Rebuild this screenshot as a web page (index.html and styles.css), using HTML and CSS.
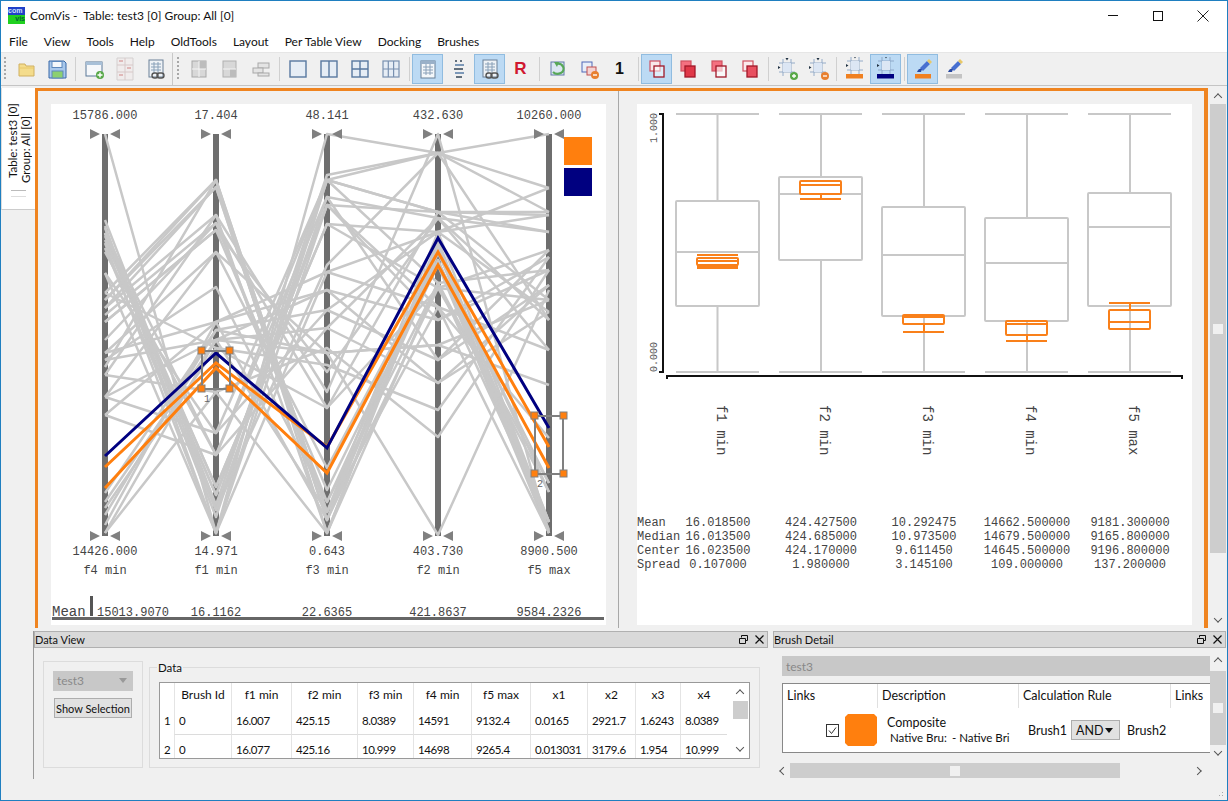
FILE: index.html
```html
<!DOCTYPE html>
<html lang="en">
<head>
    <meta charset="UTF-8">
    <title>ComVis - Table: test3 [0] Group: All [0]</title>
    <link rel="stylesheet" href="styles.css">
</head>
<body>
<svg class="icon-defs" width="0" height="0">
    <defs>
        <symbol id="i-folder" viewBox="0 0 24 24"><path d="M5 7h6l1 2h8v10H5z" fill="#f4dc8c" stroke="#d0b060"/><path d="M5 11h15" stroke="#e8c868"/></symbol>
        <symbol id="i-save" viewBox="0 0 24 24"><path d="M4 4h15l2 2v15H4z" fill="#a8c8ec" stroke="#3868a8"/><rect x="7" y="4.500" width="10" height="6" fill="#f4f8fc" stroke="#5c88bc"/><rect x="7" y="14" width="11" height="7" fill="#8cd070" stroke="#5c88bc"/></symbol>
        <symbol id="i-new" viewBox="0 0 24 24"><rect x="4" y="5" width="16" height="14" fill="#f6f8fb" stroke="#5a7898"/><rect x="4" y="5" width="16" height="3" fill="#a8c0d8"/><circle cx="18" cy="18" r="4" fill="#58a848"/><path d="M18 15.500v5M15.500 18h5" stroke="#fff" stroke-width="1.400"/></symbol>
        <symbol id="i-sheets" viewBox="0 0 24 24"><path d="M4 1h16v22H4z" fill="#f0ecec" stroke="#d4d0d0"/><path d="M12 1v22M4 8h16M4 15h16" stroke="#d8c8c8"/><path d="M6 4h4M14 11h4M6 18h4" stroke="#e0b8b8" stroke-width="2"/></symbol>
        <symbol id="i-link" viewBox="0 0 24 24"><rect x="5" y="3" width="14" height="17" fill="#eef2f6" stroke="#6a8098"/><path d="M7 7h10M7 10h10M7 13h10M10 5v11M14 5v11" stroke="#88a0b8"/><rect x="8" y="16" width="6" height="5" rx="2.500" fill="none" stroke="#555" stroke-width="1.400"/><rect x="13" y="16" width="7" height="5" rx="2.500" fill="none" stroke="#555" stroke-width="1.400"/></symbol>
        <symbol id="i-gsplit" viewBox="0 0 24 24"><rect x="5" y="4" width="14" height="16" fill="#d8d8d8" stroke="#a8a8a8"/><rect x="12" y="4" width="7" height="8" fill="#bcbcbc"/><path d="M12 4v16M5 12h14" stroke="#f4f4f4"/></symbol>
        <symbol id="i-gsplit2" viewBox="0 0 24 24"><rect x="5" y="4" width="13" height="16" fill="#d8d8d8" stroke="#b0b0b0"/><rect x="12" y="12" width="6" height="8" fill="#bcbcbc"/><path d="M5 12h13" stroke="#f4f4f4"/></symbol>
        <symbol id="i-gtree" viewBox="0 0 24 24"><rect x="9" y="6" width="11" height="5" fill="#e4e4e4" stroke="#a8a8a8"/><rect x="4" y="11" width="10" height="5" fill="#e4e4e4" stroke="#a8a8a8"/><rect x="9" y="16" width="11" height="3" fill="#e4e4e4" stroke="#a8a8a8"/></symbol>
        <symbol id="i-p1" viewBox="0 0 24 24"><rect x="4" y="4" width="16" height="16" fill="#e6edf5" stroke="#5878a0" stroke-width="1.400"/></symbol>
        <symbol id="i-p2" viewBox="0 0 24 24"><rect x="4" y="4" width="16" height="16" fill="#e6edf5" stroke="#5878a0" stroke-width="1.400"/><path d="M12 4v16" stroke="#5878a0" stroke-width="1.400"/></symbol>
        <symbol id="i-p4" viewBox="0 0 24 24"><rect x="4" y="4" width="16" height="16" fill="#e6edf5" stroke="#5878a0" stroke-width="1.400"/><path d="M12 4v16M4 12h16" stroke="#5878a0" stroke-width="1.400"/></symbol>
        <symbol id="i-p6" viewBox="0 0 24 24"><rect x="4" y="4" width="16" height="16" fill="#e6edf5" stroke="#7890b0" stroke-width="1.200"/><path d="M9.300 4v16M14.600 4v16M4 12h16" stroke="#7890b0" stroke-width="1.200"/></symbol>
        <symbol id="i-table" viewBox="0 0 24 24"><rect x="5" y="4" width="14" height="17" fill="#f4f7fa" stroke="#6a8098"/><rect x="5" y="4" width="14" height="3" fill="#9ab0c8"/><path d="M7 10h10M7 13h10M7 16h10M10 7v11M14 7v11" stroke="#8aa0b8"/></symbol>
        <symbol id="i-order" viewBox="0 0 24 24"><path d="M8 4h2M13 4h2M7 12h9M9 20h6" stroke="#345" stroke-width="1.400"/><path d="M8 8h9M8 16h9" stroke="#7c98b8" stroke-width="2.200"/></symbol>
        <symbol id="i-cycle" viewBox="0 0 24 24"><rect x="5" y="5" width="13" height="13" fill="#dce6f2" stroke="#6078a8"/><path d="M7 15a6 5 0 1 0 3-8" fill="none" stroke="#58a858" stroke-width="2.200"/><path d="M8 5l5 0-2 5z" fill="#58a858"/></symbol>
        <symbol id="i-copy" viewBox="0 0 24 24"><rect x="5" y="5" width="10" height="10" fill="#e8eef8" stroke="#5068b8"/><rect x="10" y="10" width="9" height="8" fill="#f4d4d4" stroke="#c05050"/><circle cx="18" cy="18" r="4" fill="#e88030"/><path d="M16 18h4" stroke="#fff" stroke-width="1.400"/></symbol>
        <symbol id="i-r1" viewBox="0 0 24 24"><rect x="5" y="4" width="10" height="10" fill="#f8e8ea" stroke="#d05060" stroke-width="1.200"/><rect x="9" y="9" width="10" height="11" fill="#fff" fill-opacity=".5" stroke="#a01828" stroke-width="1.300"/></symbol>
        <symbol id="i-r2" viewBox="0 0 24 24"><rect x="5" y="4" width="10" height="10" fill="#f47080" stroke="#d05060" stroke-width="1.200"/><rect x="9" y="9" width="10" height="11" fill="#e03848" stroke="#a01828" stroke-width="1.300"/></symbol>
        <symbol id="i-r3" viewBox="0 0 24 24"><rect x="5" y="4" width="10" height="10" fill="#f47080" stroke="#d05060" stroke-width="1.200"/><rect x="9" y="9" width="10" height="11" fill="#fff" fill-opacity=".6" stroke="#a01828" stroke-width="1.300"/></symbol>
        <symbol id="i-r4" viewBox="0 0 24 24"><rect x="5" y="4" width="10" height="10" fill="#fbeaec" stroke="#d05060" stroke-width="1.200"/><rect x="9" y="9" width="10" height="11" fill="#e85060" stroke="#a01828" stroke-width="1.300"/></symbol>
        <symbol id="i-cross" viewBox="0 0 24 24"><path d="M8 2v17M16 2v17M4 6h16M4 15h16" stroke="#8aa4c4" stroke-width=".9"/><rect x="8" y="6" width="8" height="9" fill="#dce6f4"/><path d="M10.500 1h3L12 3.500zM3 9v3l2.500-1.500z" fill="#234"/></symbol>
        <symbol id="i-brush" viewBox="0 0 24 24"><path d="M9 11l7-7 3 3-7 7z" fill="#4870d0"/><path d="M16 4l2-2 3 3-2 2z" fill="#e8c868"/><path d="M6 15c1-3 3-4 5-3l-1 3z" fill="#2848a0"/></symbol>
    </defs>
</svg>

<div class="window">
    <header class="titlebar">
        <div class="app-icon"><span class="app-com">com</span><span class="app-vis">vis</span></div>
        <div class="title-text">ComVis -&nbsp; Table: test3 [0] Group: All [0]</div>
        <div class="win-controls">
            <span class="win-min"></span>
            <span class="win-max"></span>
            <svg class="win-close" width="12" height="12" viewBox="0 0 12 12"><path d="M.5.500l11 11M11.500.500l-11 11" stroke="#222" fill="none"/></svg>
        </div>
    </header>

    <nav class="menubar">
        <span>File</span><span>View</span><span>Tools</span><span>Help</span><span>OldTools</span><span>Layout</span><span>Per Table View</span><span>Docking</span><span>Brushes</span>
    </nav>

    <div class="toolbar">
        <span class="grip"></span>
        <button class="tool"><svg><use href="#i-folder"/></svg></button>
        <button class="tool"><svg><use href="#i-save"/></svg></button>
        <span class="sep"></span>
        <button class="tool"><svg><use href="#i-new"/></svg></button>
        <button class="tool"><svg><use href="#i-sheets"/></svg></button>
        <button class="tool"><svg><use href="#i-link"/></svg></button>
        <span class="bar-end"></span>
        <span class="grip"></span>
        <button class="tool"><svg><use href="#i-gsplit"/></svg></button>
        <button class="tool"><svg><use href="#i-gsplit2"/></svg></button>
        <button class="tool"><svg><use href="#i-gtree"/></svg></button>
        <span class="sep"></span>
        <button class="tool"><svg><use href="#i-p1"/></svg></button>
        <button class="tool"><svg><use href="#i-p2"/></svg></button>
        <button class="tool"><svg><use href="#i-p4"/></svg></button>
        <button class="tool"><svg><use href="#i-p6"/></svg></button>
        <span class="sep"></span>
        <button class="tool active"><svg><use href="#i-table"/></svg></button>
        <button class="tool"><svg><use href="#i-order"/></svg></button>
        <button class="tool active"><svg><use href="#i-link"/></svg></button>
        <button class="tool tool-r">R</button>
        <span class="sep"></span>
        <button class="tool"><svg><use href="#i-cycle"/></svg></button>
        <button class="tool"><svg><use href="#i-copy"/></svg></button>
        <button class="tool tool-one">1</button>
        <span class="sep"></span>
        <button class="tool active"><svg><use href="#i-r1"/></svg></button>
        <button class="tool"><svg><use href="#i-r2"/></svg></button>
        <button class="tool"><svg><use href="#i-r3"/></svg></button>
        <button class="tool"><svg><use href="#i-r4"/></svg></button>
        <span class="sep"></span>
        <button class="tool"><svg viewBox="0 0 24 24"><use href="#i-cross"/><circle cx="19" cy="19" r="4" fill="#58a848"/><path d="M19 17v4M17 19h4" stroke="#fff" stroke-width="1.300"/></svg></button>
        <button class="tool"><svg viewBox="0 0 24 24"><use href="#i-cross"/><circle cx="19" cy="19" r="4" fill="#e88030"/><path d="M17 19h4" stroke="#fff" stroke-width="1.300"/></svg></button>
        <span class="sep"></span>
        <button class="tool"><svg viewBox="0 0 24 24"><use href="#i-cross" transform="translate(0 -2)"/><rect x="3" y="17" width="17" height="4.500" fill="#f08020"/></svg></button>
        <button class="tool active"><svg viewBox="0 0 24 24"><use href="#i-cross" transform="translate(0 -2)"/><rect x="3" y="17" width="17" height="4.500" fill="#000080"/></svg></button>
        <span class="sep"></span>
        <button class="tool active"><svg viewBox="0 0 24 24"><use href="#i-brush"/><rect x="4" y="17" width="16" height="4.500" fill="#f08020"/></svg></button>
        <button class="tool"><svg viewBox="0 0 24 24"><use href="#i-brush"/><rect x="4" y="17" width="16" height="4.500" fill="#c4c4c4"/></svg></button>
    </div>

    <div class="workspace">
        <aside class="side-tabs">
            <div class="side-tab">
                <div class="side-tab-text">
                    <div class="side-line-first">Table: test3 [0]</div>
                    <div>Group: All [0]</div>
                </div>
                <span class="side-tab-icon"></span>
            </div>
        </aside>

        <main class="frame">
            <section class="view view-left">
                <svg class="plot" width="555" height="521" viewBox="51 104 555 521">
                    <g class="axis-lines">
                        <path d="M105 134V536M216 134V536M327 134V536M438 134V536M549 134V536"/>
                    </g>
                    <g class="lines-bg">
                        <polyline points="105,134 216,533 327,134 438,153 549,134"/>
                        <polyline points="105,220 216,505 327,175 438,153 549,212"/>
                        <polyline points="105,226 216,533 327,180 438,153 549,188"/>
                        <polyline points="105,233 216,517 327,180 438,212 549,215"/>
                        <polyline points="105,228 216,510 327,197 438,218 549,232"/>
                        <polyline points="105,233 216,495 327,205 438,212 549,300"/>
                        <polyline points="105,236 216,487 327,224 438,232 549,188"/>
                        <polyline points="105,240 216,495 327,205 438,320 549,257"/>
                        <polyline points="105,252 216,455 327,180 438,283 549,270"/>
                        <polyline points="105,233 216,487 327,224 438,288 549,250"/>
                        <polyline points="105,273 216,433 327,180 438,212 549,232"/>
                        <polyline points="105,233 216,455 327,197 438,360 549,285"/>
                        <polyline points="105,248 216,510 327,265 438,153 549,320"/>
                        <polyline points="105,243 216,533 327,272 438,232 549,312"/>
                        <polyline points="105,293 216,180 327,512 438,232 549,522"/>
                        <polyline points="105,300 216,187 327,520 438,240 549,533"/>
                        <polyline points="105,308 216,215 327,533 438,250 549,533"/>
                        <polyline points="105,315 216,223 327,502 438,260 549,522"/>
                        <polyline points="105,322 216,230 327,490 438,265 549,533"/>
                        <polyline points="105,300 216,180 327,533 438,283 549,492"/>
                        <polyline points="105,308 216,187 327,520 438,288 549,483"/>
                        <polyline points="105,353 216,252 327,468 438,260 549,530"/>
                        <polyline points="105,360 216,287 327,502 438,283 549,522"/>
                        <polyline points="105,367 216,180 327,512 438,307 549,533"/>
                        <polyline points="105,375 216,215 327,392 438,134 549,533"/>
                        <polyline points="105,340 216,223 327,408 438,212 549,212"/>
                        <polyline points="105,322 216,230 327,372 438,218 549,320"/>
                        <polyline points="105,397 216,252 327,353 438,345 549,300"/>
                        <polyline points="105,415 216,322 327,290 438,320 549,270"/>
                        <polyline points="105,493 216,330 327,310 438,360 549,250"/>
                        <polyline points="105,502 216,340 327,328 438,383 549,285"/>
                        <polyline points="105,508 216,348 327,365 438,410 549,257"/>
                        <polyline points="105,533 216,392 327,348 438,437 549,270"/>
                        <polyline points="105,525 216,322 327,272 438,307 549,350"/>
                        <polyline points="105,533 216,340 327,290 438,383 549,312"/>
                        <polyline points="105,515 216,330 327,353 438,345 549,385"/>
                        <polyline points="105,397 216,433 327,310 438,232 549,215"/>
                        <polyline points="105,415 216,455 327,328 438,218 549,350"/>
                        <polyline points="105,293 216,348 327,408 438,288 549,300"/>
                        <polyline points="105,273 216,533 327,205 438,307 549,438"/>
                        <polyline points="105,353 216,322 327,520 438,253 549,492"/>
                        <polyline points="105,360 216,340 327,512 438,262 549,483"/>
                        <polyline points="105,375 216,392 327,533 438,245 549,522"/>
                        <polyline points="105,397 216,340 327,353 438,535 549,290"/>
                    </g>
                    <g class="lines-orange">
                        <polyline points="105,467 216,363 327,447 438,252 549,447"/>
                        <polyline points="105,488 216,368 327,473 438,265 549,468"/>
                    </g>
                    <polyline class="line-navy" points="105,456 216,353 327,448 438,238 549,428"/>

                    <g class="axis-arrows">
                        <path d="M90 129l10 5-10 5zM120 129l-10 5 10 5zM201 129l10 5-10 5zM231 129l-10 5 10 5zM312 129l10 5-10 5zM342 129l-10 5 10 5zM423 129l10 5-10 5zM453 129l-10 5 10 5zM534 129l10 5-10 5zM564 129l-10 5 10 5z"/>
                        <path d="M90 531l10 5-10 5zM120 531l-10 5 10 5zM201 531l10 5-10 5zM231 531l-10 5 10 5zM312 531l10 5-10 5zM342 531l-10 5 10 5zM423 531l10 5-10 5zM453 531l-10 5 10 5zM534 531l10 5-10 5zM564 531l-10 5 10 5z"/>
                    </g>

                    <g class="sel-box">
                        <rect x="202" y="351" width="28" height="38"/>
                        <rect x="535" y="416" width="28" height="58"/>
                    </g>
                    <g class="sel-handle">
                        <rect x="198" y="347" width="7" height="7"/><rect x="226" y="347" width="7" height="7"/>
                        <rect x="198" y="385" width="7" height="7"/><rect x="226" y="385" width="7" height="7"/>
                        <rect x="531" y="412" width="7" height="7"/><rect x="560" y="412" width="7" height="7"/>
                        <rect x="531" y="470" width="7" height="7"/><rect x="560" y="470" width="7" height="7"/>
                    </g>
                    <text class="sel-label" x="204" y="402">1</text>
                    <text class="sel-label" x="537" y="487">2</text>

                    <rect x="564" y="137" width="28" height="28" fill="#ff7f0e"/>
                    <rect x="564" y="168" width="28" height="28" fill="#000080"/>

                    <g class="mono mid">
                        <text x="105" y="119">15786.000</text>
                        <text x="216" y="119">17.404</text>
                        <text x="327" y="119">48.141</text>
                        <text x="438" y="119">432.630</text>
                        <text x="549" y="119">10260.000</text>
                        <text x="105" y="555">14426.000</text>
                        <text x="216" y="555">14.971</text>
                        <text x="327" y="555">0.643</text>
                        <text x="438" y="555">403.730</text>
                        <text x="549" y="555">8900.500</text>
                        <text x="105" y="574">f4 min</text>
                        <text x="216" y="574">f1 min</text>
                        <text x="327" y="574">f3 min</text>
                        <text x="438" y="574">f2 min</text>
                        <text x="549" y="574">f5 max</text>
                        <text x="133" y="616">15013.9070</text>
                        <text x="216" y="616">16.1162</text>
                        <text x="327" y="616">22.6365</text>
                        <text x="438" y="616">421.8637</text>
                        <text x="549" y="616">9584.2326</text>
                    </g>
                    <text class="mono mean-label" x="52" y="616">Mean</text>
                    <rect x="90" y="596" width="3" height="20" fill="#555"/>
                    <rect x="52" y="617" width="552" height="3" fill="#666"/>
                </svg>
            </section>

            <div class="view-split"></div>

            <section class="view view-right">
                <svg class="plot" width="555" height="521" viewBox="637 104 555 521">
                    <path class="axis-black" d="M659 114H663V372H659M667 379V376H1182V379"/>
                    <text class="mono tick-y" transform="translate(657 143) rotate(-90)">1.000</text>
                    <text class="mono tick-y" transform="translate(657 372) rotate(-90)">0.000</text>

                    <g class="box-gray">
                        <path d="M676 114H759M717.500 114V201M717.500 306V372M676 372H759"/>
                        <rect x="676" y="201" width="83" height="105" rx="1"/>
                        <path d="M676 252H759"/>
                        <path d="M779 114H862M821 114V177M821 260V372M779 372H862"/>
                        <rect x="779" y="177" width="83" height="83" rx="1"/>
                        <path d="M779 194H862"/>
                        <path d="M882 114H965M924 114V207M924 316V372M882 372H965"/>
                        <rect x="882" y="207" width="83" height="109" rx="1"/>
                        <path d="M882 255H965"/>
                        <path d="M985 114H1068M1027 114V218M1027 321V372M985 372H1068"/>
                        <rect x="985" y="218" width="83" height="103" rx="1"/>
                        <path d="M985 263H1068"/>
                        <path d="M1088 114H1171M1130 114V193M1130 306V372M1088 372H1171"/>
                        <rect x="1088" y="193" width="83" height="113" rx="1"/>
                        <path d="M1088 227H1171"/>
                    </g>
                    <g class="box-orange">
                        <path d="M697 255H738M697 266H738M697 268H738"/>
                        <rect x="697" y="258" width="41" height="7" rx="1"/>
                        <path d="M697 261H738"/>
                        <rect x="800" y="181" width="41" height="13" rx="1"/>
                        <path d="M800 185H841M821 194V199M800 199H841"/>
                        <rect x="903" y="315" width="41" height="9" rx="1"/>
                        <path d="M903 317H944M924 324V332M903 332H944"/>
                        <rect x="1006" y="321" width="41" height="14" rx="1"/>
                        <path d="M1006 324H1047M1027 335V341M1006 341H1047"/>
                        <rect x="1109" y="310" width="41" height="19" rx="1"/>
                        <path d="M1109 322H1150M1130 303V310M1109 303H1150"/>
                    </g>

                    <text class="mono col-name" transform="translate(717 405) rotate(90)">f1 min</text>
                    <text class="mono col-name" transform="translate(820 405) rotate(90)">f2 min</text>
                    <text class="mono col-name" transform="translate(923 405) rotate(90)">f3 min</text>
                    <text class="mono col-name" transform="translate(1026 405) rotate(90)">f4 min</text>
                    <text class="mono col-name" transform="translate(1129 405) rotate(90)">f5 max</text>

                    <g class="mono">
                        <text x="637" y="526">Mean</text>
                        <text x="637" y="540">Median</text>
                        <text x="637" y="554">Center</text>
                        <text x="637" y="568">Spread</text>
                    </g>
                    <g class="mono mid">
                        <text x="718" y="526">16.018500</text>
                        <text x="718" y="540">16.013500</text>
                        <text x="718" y="554">16.023500</text>
                        <text x="718" y="568">0.107000</text>
                        <text x="821" y="526">424.427500</text>
                        <text x="821" y="540">424.685000</text>
                        <text x="821" y="554">424.170000</text>
                        <text x="821" y="568">1.980000</text>
                        <text x="924" y="526">10.292475</text>
                        <text x="924" y="540">10.973500</text>
                        <text x="924" y="554">9.611450</text>
                        <text x="924" y="568">3.145100</text>
                        <text x="1027" y="526">14662.500000</text>
                        <text x="1027" y="540">14679.500000</text>
                        <text x="1027" y="554">14645.500000</text>
                        <text x="1027" y="568">109.000000</text>
                        <text x="1130" y="526">9181.300000</text>
                        <text x="1130" y="540">9165.800000</text>
                        <text x="1130" y="554">9196.800000</text>
                        <text x="1130" y="568">137.200000</text>
                    </g>
                </svg>
            </section>
        </main>

        <div class="vscroll vscroll-main">
            <span class="arrow arrow-up"></span>
            <div class="vscroll-track"><span class="scroll-handle"></span></div>
            <span class="arrow arrow-down"></span>
        </div>
    </div>

    <div class="docks">
        <section class="dock dock-data">
            <div class="dock-title">
                <span>Data View</span>
                <div class="dock-btns">
                    <svg width="9" height="9" viewBox="0 0 9 9"><path d="M2.500 2.500V.5h6v5H6.500M.5 3.500h6v5h-6z" fill="none" stroke="#111"/></svg>
                    <svg width="9" height="9" viewBox="0 0 9 9"><path d="M.5.500l8 8M8.500.500l-8 8" stroke="#111" stroke-width="1.200"/></svg>
                </div>
            </div>
            <div class="dock-body data-body">
                <div class="sel-group">
                    <div class="combo-off">test3<span class="caret caret-off"></span></div>
                    <div class="push-btn">Show Selection</div>
                </div>
                <fieldset class="data-group">
                    <legend>Data</legend>
                    <div class="data-table">
                        <div class="data-cols">
                            <div class="dt-row dt-head">
                                <span></span><span>Brush Id</span><span>f1 min</span><span>f2 min</span><span>f3 min</span><span>f4 min</span><span>f5 max</span><span>x1</span><span>x2</span><span>x3</span><span>x4</span>
                            </div>
                            <div class="dt-row dt-line">
                                <span>1</span><span>0</span><span>16.007</span><span>425.15</span><span>8.0389</span><span>14591</span><span>9132.4</span><span>0.0165</span><span>2921.7</span><span>1.6243</span><span>8.0389</span>
                            </div>
                            <div class="dt-row dt-last">
                                <span>2</span><span>0</span><span>16.077</span><span>425.16</span><span>10.999</span><span>14698</span><span>9265.4</span><span>0.013031</span><span>3179.6</span><span>1.954</span><span>10.999</span>
                            </div>
                        </div>
                        <div class="vscroll vscroll-table">
                            <span class="arrow arrow-up"></span>
                            <div class="table-thumb-area"><span class="table-thumb"></span></div>
                            <span class="arrow arrow-down"></span>
                        </div>
                    </div>
                </fieldset>
            </div>
        </section>

        <section class="dock dock-brush">
            <div class="dock-title">
                <span>Brush Detail</span>
                <div class="dock-btns">
                    <svg width="9" height="9" viewBox="0 0 9 9"><path d="M2.500 2.500V.5h6v5H6.500M.5 3.500h6v5h-6z" fill="none" stroke="#111"/></svg>
                    <svg width="9" height="9" viewBox="0 0 9 9"><path d="M.5.500l8 8M8.500.500l-8 8" stroke="#111" stroke-width="1.200"/></svg>
                </div>
            </div>
            <div class="dock-body brush-body">
                <div class="brush-main">
                    <div class="brush-scroll">
                        <div class="brush-combo">test3</div>
                        <div class="brush-table">
                            <div class="bt-row bt-head">
                                <span>Links</span><span>Description</span><span>Calculation Rule</span><span>Links</span>
                            </div>
                            <div class="bt-row bt-body">
                                <div class="bt-links">
                                    <svg class="check" width="13" height="13" viewBox="0 0 13 13"><rect x=".5" y=".5" width="12" height="12" fill="#fff" stroke="#333"/><path d="M3 6.500l2.500 3L10 3.500" fill="none" stroke="#333"/></svg>
                                    <span class="swatch"></span>
                                </div>
                                <div class="bt-desc">
                                    <div>Composite</div>
                                    <div class="bt-natives"><span class="native-a">Native Bru:</span><span>- Native Bri</span></div>
                                </div>
                                <div class="bt-rule">
                                    <span>Brush1</span>
                                    <span class="and-combo">AND<span class="caret"></span></span>
                                    <span>Brush2</span>
                                </div>
                                <div></div>
                            </div>
                        </div>
                    </div>
                    <div class="vscroll vscroll-brush">
                        <span class="arrow arrow-up"></span>
                        <div class="vscroll-track"><span class="scroll-handle"></span></div>
                        <span class="arrow arrow-down"></span>
                    </div>
                </div>
                <div class="hscroll">
                    <span class="arrow arrow-left"></span>
                    <div class="hscroll-track"><span class="hscroll-handle"></span></div>
                    <span class="arrow arrow-right"></span>
                </div>
            </div>
        </section>
    </div>
    <span class="size-grip"></span>
</div>
</body>
</html>
```

FILE: styles.css
```css
* {
    margin: 0;
    padding: 0;
    box-sizing: border-box;
}

html, body {
    width: 1228px;
    height: 801px;
    overflow: hidden;
}

body {
    font-family: "Lato", "Noto Sans", sans-serif;
    font-size: 12px;
    color: #111;
    background: #f0f0f0;
}

.icon-defs {
    position: absolute;
}

.window {
    position: relative;
    width: 1228px;
    height: 801px;
    border: 1px solid #1f7fc0;
    display: flex;
    flex-direction: column;
    background: #f0f0f0;
}

/* title bar */
.titlebar {
    height: 31px;
    flex: none;
    display: flex;
    align-items: center;
    background: #fff;
    padding: 0 0 2px 7px;
}

.app-icon {
    width: 17px;
    height: 17px;
    display: flex;
    flex-direction: column;
    font: bold 7px/8px "Liberation Sans", sans-serif;
    overflow: hidden;
}

.app-com {
    background: #2040c8;
    color: #cfe0ff;
    height: 8px;
}

.app-vis {
    background: #20d020;
    color: #063;
    height: 9px;
    text-align: right;
}

.title-text {
    margin-left: 5px;
    font-size: 12px;
}

.win-controls {
    margin-left: auto;
    display: flex;
    align-items: center;
    margin-right: 18px;
}

.win-min {
    width: 10px;
    height: 1px;
    background: #111;
    margin-right: 35px;
}

.win-max {
    width: 10px;
    height: 10px;
    border: 1px solid #111;
    margin-right: 34px;
}

.menubar {
    height: 20px;
    flex: none;
    display: flex;
    gap: 16px;
    padding: 0 0 2px 8px;
    align-items: center;
    background: #fff;
    font-size: 12px;
}

/* toolbar */
.toolbar {
    height: 34px;
    flex: none;
    display: flex;
    align-items: center;
    padding-left: 3px;
    background: #f0f0f0;
    border-top: 1px solid #e6e6e6;
    border-bottom: 1px solid #c4c4c4;
}

.grip {
    width: 2px;
    height: 24px;
    margin-right: 4px;
    background: repeating-linear-gradient(to bottom, #a8a8a8 0 2px, transparent 2px 4px);
}

.tool {
    width: 31px;
    height: 30px;
    flex: none;
    border: 1px solid transparent;
    background: none;
    display: flex;
    align-items: center;
    justify-content: center;
}

.tool svg {
    width: 24px;
    height: 24px;
}

.tool.active {
    background: #bcdaf4;
    border-color: #90bce0;
}

.tool-r {
    color: #d01830;
    font: bold 17px "Liberation Sans", sans-serif;
}

.tool-one {
    color: #111;
    font: bold 16px "Liberation Sans", sans-serif;
}

.sep {
    width: 6px;
    height: 24px;
    flex: none;
    background: linear-gradient(#d0d0d0, #d0d0d0) center / 1px 100% no-repeat;
}

.bar-end {
    width: 1px;
    height: 32px;
    margin: 0 4px 0 1px;
    background: #c8c8c8;
}

/* central area */
.workspace {
    height: 540px;
    flex: none;
    margin-top: 2px;
    display: flex;
}

.side-tabs {
    width: 34px;
    flex: none;
}

.side-tab {
    height: 122px;
    background: #fff;
    border-bottom: 1px solid #ccc;
    border-left: 1px solid #ddd;
    display: flex;
    flex-direction: column;
    align-items: center;
}

.side-tab-text {
    writing-mode: vertical-rl;
    transform: rotate(180deg);
    height: 81px;
    margin-top: 14px;
    font: 11.500px/13px "Lato", sans-serif;
    white-space: nowrap;
}

.side-line-first {
    padding-top: 5px;
}

.side-tab-icon {
    width: 15px;
    height: 7px;
    margin-top: 7px;
    border-top: 1px solid #bbb;
    border-bottom: 1px solid #ddd;
}

.frame {
    width: 1173px;
    flex: none;
    display: flex;
    background: #f0f0f0;
    border: solid #ef8420;
    border-width: 3px 4px 0 3px;
    padding: 13px 0 3px 13px;
}

.view-left {
    width: 555px;
    flex: none;
    background: #fff;
}

.view-split {
    width: 1px;
    height: 537px;
    margin-top: -13px;
    margin-left: 12px;
    margin-right: 18px;
    background: #a8a8a8;
    flex: none;
}

.view-right {
    width: 555px;
    flex: none;
    background: #fff;
}

.plot {
    display: block;
}

.mono {
    font-family: "Liberation Mono", monospace;
    font-size: 12px;
    fill: #444;
}

.mid {
    text-anchor: middle;
}

.mean-label {
    text-decoration: underline;
    font-size: 14px;
}

.col-name {
    font-size: 14px;
}

.axis-lines {
    stroke: #6e6e6e;
    stroke-width: 6;
    fill: none;
}

.lines-bg polyline {
    fill: none;
    stroke: #c8c8c8;
    stroke-width: 2.500;
    stroke-linejoin: round;
}

.lines-orange polyline {
    fill: none;
    stroke: #ff7f0e;
    stroke-width: 3;
}

.line-navy {
    fill: none;
    stroke: #000080;
    stroke-width: 3;
}

.axis-arrows path {
    fill: #808080;
}

.sel-box rect {
    fill: none;
    stroke: #808080;
    stroke-width: 2;
}

.sel-handle rect {
    fill: #ff7f0e;
    stroke: #808080;
}

.sel-label {
    font: 10px "Liberation Mono", monospace;
    fill: #666;
}

.axis-black {
    fill: none;
    stroke: #111;
    stroke-width: 2;
}

.tick-y {
    font-size: 10px;
    fill: #555;
}

.box-gray rect, .box-gray path {
    fill: none;
    stroke: #c8c8c8;
    stroke-width: 2;
}

.box-orange rect, .box-orange path {
    fill: none;
    stroke: #f9801a;
    stroke-width: 2;
}

/* scrollbars */
.arrow {
    display: block;
    flex: none;
    position: relative;
}

.arrow::before {
    content: "";
    position: absolute;
    left: 50%;
    top: 50%;
    width: 5px;
    height: 5px;
    border: solid #555;
    border-width: 1.500px 0 0 1.500px;
}

.arrow-up::before { transform: translate(-50%, -25%) rotate(45deg); }
.arrow-down::before { transform: translate(-50%, -75%) rotate(225deg); }
.arrow-left::before { transform: translate(-25%, -50%) rotate(-45deg); }
.arrow-right::before { transform: translate(-75%, -50%) rotate(135deg); }

.vscroll {
    display: flex;
    flex-direction: column;
}

.vscroll-main {
    width: 16px;
    margin-left: 2px;
    height: 540px;
}

.vscroll-main .arrow {
    height: 16px;
}

.vscroll-main .vscroll-track {
    height: 449px;
    margin-bottom: 59px;
    background: #cdcdcd;
    display: flex;
    align-items: center;
    justify-content: center;
}

.scroll-handle {
    width: 10px;
    height: 10px;
    background: #f0f0f0;
}

/* docks */
.docks {
    display: flex;
    margin: 3px 0 0 32px;
    gap: 5px;
}

.dock-title {
    height: 17px;
    background: #d9d9d9;
    border: 1px solid #b0b0b0;
    display: flex;
    align-items: center;
    justify-content: space-between;
    padding-right: 3px;
    font-size: 11px;
}

.dock-btns {
    display: flex;
    gap: 7px;
}

.dock-data {
    width: 735px;
    border-left: 1px solid #999;
    height: 148px;
}

.data-body {
    display: flex;
    padding: 13px 8px 0 9px;
    gap: 6px;
}

.sel-group {
    width: 100px;
    height: 107px;
    border: 1px solid #dcdcdc;
    padding: 9px 9px;
}

.combo-off {
    height: 20px;
    background: #c8c8c8;
    color: #8a8a8a;
    padding: 0 4px 1px;
    display: flex;
    align-items: center;
    justify-content: space-between;
}

.caret {
    width: 0;
    height: 0;
    border: solid transparent;
    border-width: 5px 4px 0;
    border-top-color: #111;
}

.caret-off {
    border-top-color: #999;
    margin-right: 2px;
}

.push-btn {
    margin: 7px 1px 0;
    height: 20px;
    background: #e1e1e1;
    border: 1px solid #adadad;
    display: flex;
    align-items: center;
    justify-content: center;
    white-space: nowrap;
    font-size: 11px;
}

.data-group {
    width: 611px;
    height: 102px;
    margin-top: 5px;
    border: 1px solid #dcdcdc;
    padding: 13px 9px 0;
}

.data-group legend {
    margin-left: -2px;
    padding: 0 1px;
    font-size: 11.500px;
    line-height: 3px;
}

.data-table {
    height: 77px;
    background: #fff;
    border: 1px solid #999;
    display: flex;
    overflow: hidden;
}

.data-cols {
    width: 567px;
    flex: none;
    overflow: hidden;
}

.dt-row {
    display: grid;
    grid-template-columns: 14px 57px 60px 66px 56px 58px 59px 57px 48px 45px 47px;
    height: 24px;
    line-height: 24px;
    font-size: 11.500px;
    letter-spacing: -.4px;
}

.dt-row span {
    padding-left: 4px;
    height: 100%;
    border-left: 1px solid #e4e4e4;
    white-space: nowrap;
    overflow: hidden;
}

.dt-row span:first-child {
    border-left: 0;
}

.dt-head {
    font-size: 12px;
    letter-spacing: 0;
}

.dt-head span {
    text-align: center;
    padding-left: 0;
}

.dt-line {
    height: 28px;
    line-height: 27px;
}

.dt-line span:not(:first-child) {
    border-bottom: 1px solid #dcdcdc;
}

.dt-last {
    height: 30px;
    line-height: 30px;
}

.vscroll-table {
    width: 18px;
    margin-left: auto;
    height: 75px;
}

.vscroll-table .arrow {
    height: 18px;
}

.table-thumb-area {
    flex: 1;
}

.table-thumb {
    display: block;
    width: 15px;
    height: 18px;
    margin-left: 2px;
    background: #cdcdcd;
}

.dock-brush {
    width: 453px;
}

.brush-body {
    height: 131px;
    display: flex;
    flex-direction: column;
}

.brush-main {
    display: flex;
    height: 112px;
}

.brush-scroll {
    width: 437px;
    flex: none;
    overflow: hidden;
    padding: 8px 0 0 9px;
}

.brush-combo {
    height: 20px;
    background: #c8c8c8;
    color: #888;
    padding: 3px 4px;
}

.brush-table {
    height: 70px;
    margin-top: 7px;
    margin-right: -4px;
    background: #fff;
    border: 1px solid #888;
    font-size: 12.500px;
}

.bt-row {
    display: grid;
    grid-template-columns: 94px 141px 152px 60px;
}

.bt-head {
    height: 24px;
    line-height: 24px;
}

.bt-head span {
    padding-left: 4px;
    border-left: 1px solid #e0e0e0;
}

.bt-head span:first-child {
    border-left: 0;
}

.bt-body {
    height: 44px;
    align-items: center;
}

.bt-links {
    display: flex;
    justify-content: flex-end;
    align-items: center;
    gap: 6px;
}

.swatch {
    width: 32px;
    height: 32px;
    background: #ff7f0e;
    clip-path: polygon(3px 0, 29px 0, 32px 3px, 32px 29px, 29px 32px, 3px 32px, 0 29px, 0 3px);
}

.bt-desc {
    padding-left: 10px;
    line-height: 15px;
}

.bt-natives {
    display: flex;
    padding-left: 3px;
    white-space: nowrap;
    font-size: 11.500px;
}

.native-a {
    width: 62px;
    flex: none;
}

.bt-rule {
    display: flex;
    align-items: center;
    gap: 7px;
    padding-left: 10px;
}

.and-combo {
    width: 49px;
    height: 20px;
    margin-left: -3px;
    background: #e1e1e1;
    border: 1px solid #adadad;
    display: flex;
    align-items: center;
    justify-content: space-between;
    padding: 0 6px 0 4px;
}

.vscroll-brush {
    width: 16px;
    flex: none;
}

.vscroll-brush .arrow-up {
    height: 23px;
}

.vscroll-brush .arrow-down {
    height: 15px;
}

.vscroll-brush .vscroll-track {
    flex: 1;
    background: #cdcdcd;
    display: flex;
    align-items: center;
    justify-content: center;
}

.hscroll {
    height: 15px;
    margin: 3px 19px 0 1px;
    display: flex;
}

.hscroll .arrow {
    width: 16px;
}

.hscroll-track {
    flex: 1;
    margin-right: 71px;
    background: #cdcdcd;
    display: flex;
    align-items: center;
    justify-content: center;
}

.hscroll-handle {
    width: 10px;
    height: 10px;
    background: #f0f0f0;
}

.size-grip {
    position: absolute;
    right: 2px;
    bottom: 2px;
    width: 10px;
    height: 10px;
    background: radial-gradient(circle, #a8a8a8 1px, transparent 1px) 0 0 / 3px 3px;
    clip-path: polygon(100% 0, 100% 100%, 0 100%);
}
```
